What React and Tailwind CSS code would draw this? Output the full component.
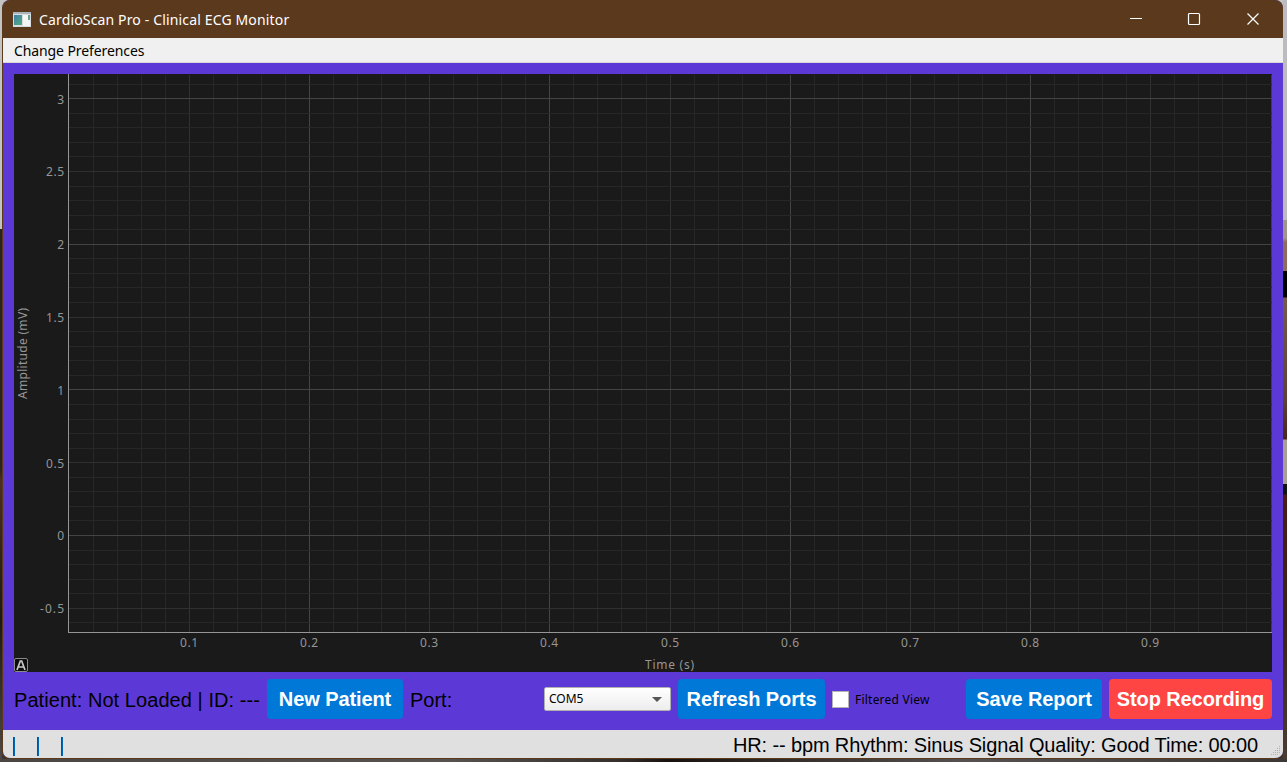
import React from "react";

const range = (a, b) => Array.from({ length: b - a + 1 }, (_, i) => a + i);

const PX = (t) => Math.round(54.9 + t * 1201.3);
const yOf = (v) => 461 - v * 145.6;
const PY = (v) => Math.round(yOf(v));

const UI = "font-['Noto_Sans',sans-serif]";
const ARIAL = "font-['Liberation_Sans',Arial,sans-serif]";

function Chart() {
  return (
    <svg width="1258" height="598" viewBox="0 0 1258 598" className="block shrink-0 bg-[#1a1a1a]">
      <g shapeRendering="crispEdges">
        {range(1, 49).map((k) => (
          <rect key={k} x={PX(k / 50)} y="1" width="1" height="557" fill={k % 10 === 0 ? "#444444" : k % 5 === 0 ? "#323232" : "#272727"} />
        ))}
        <rect x="1257" y="1" width="1" height="557" fill="#3e3e3e" />
        {range(-6, 31).map((k) => (
          <rect key={k} x="55" y={PY(k / 10)} width="1203" height="1" fill={k % 10 === 0 ? "#444444" : k % 5 === 0 ? "#303030" : "#272727"} />
        ))}
        <rect x="54" y="0" width="1" height="559" fill="#969696" />
        <rect x="54" y="558" width="1204" height="1" fill="#969696" />
      </g>
      <g fill="#969696" fontSize="12" fontFamily="'Noto Sans', sans-serif">
        {range(1, 9).map((k) => (
          <text key={k} x={PX(k / 10)} y="573" textAnchor="middle" textLength="18">{"0." + k}</text>
        ))}
        {["3", "2.5", "2", "1.5", "1", "0.5", "0"].map((s) => (
          <text key={s} x="50" y={Math.ceil(yOf(Number(s))) + 5} textAnchor="end" textLength={s.length > 1 ? 18 : 7}>{s}</text>
        ))}
        <text x="50" y="539" textAnchor="end" textLength="24">-0.5</text>
        <text x="655.500" y="595" textAnchor="middle" textLength="49">Time (s)</text>
        <text transform="translate(12.5 279.500) rotate(-90)" textAnchor="middle" textLength="91">Amplitude (mV)</text>
      </g>
      <rect x="0.5" y="584.5" width="13" height="13" rx="1.5" fill="#0c0c0c" stroke="#8a8a8a" />
      <path d="M3 596 6.300 587h1.400L11 596M4.500 593h5" fill="none" stroke="#c8c8c8" strokeWidth="1.700" />
    </svg>
  );
}

function Button({ className, children }) {
  return (
    <button className={`h-10 shrink-0 rounded-[4px] whitespace-nowrap text-[20px] font-bold leading-10 tracking-[-0.1px] text-white ${ARIAL} ${className}`}>
      {children}
    </button>
  );
}

function StatusBar() {
  return (
    <span className="flex h-[19px] w-0.5">
      <span className="w-px bg-[#6b3a10]" />
      <span className="w-px bg-[#0066b4]" />
    </span>
  );
}

function AppIcon() {
  return (
    <svg width="18" height="15" viewBox="0 0 18 15" shapeRendering="crispEdges">
      <defs>
        <linearGradient id="scr" x1="0" y1="0" x2="1" y2="1">
          <stop offset="0" stopColor="#3f7fae" />
          <stop offset="1" stopColor="#54ad7c" />
        </linearGradient>
      </defs>
      <rect width="18" height="15" fill="#d8dde0" />
      <rect width="18" height="2" fill="#aab4bc" />
      <rect x="1" y="3" width="8" height="10" fill="url(#scr)" />
      <rect x="10" y="3" width="7" height="11" fill="#f4f5f5" />
      <rect x="15" y="3" width="2" height="5" fill="#6aa093" />
    </svg>
  );
}

export default function App() {
  return (
    <div className="flex h-[762px] w-[1287px] flex-col overflow-hidden bg-[linear-gradient(to_right,#4a4643,#555250_35%,#35302c_48%,#171210_52%,#2b2521_58%,#555150_75%,#3c3835)]">
      <div className="flex h-[759px]">
        <div className="w-0.5 shrink-0 bg-[linear-gradient(#c4c4c4_0_229px,#2c241c_229px_470px,#4a3020_480px,#1d1814_620px,#4b4845)]" />
        <div className="w-[1281px] shrink-0 bg-[linear-gradient(#c4c4c4_0_50%,#3b3531_50%)]">
          <div className="flex h-[759px] w-full flex-col overflow-hidden rounded-[8px] border-b border-l border-[#5b391c] bg-[#5c39d6]">
            <div className={`flex h-[38px] shrink-0 items-center bg-[#5b391c] pl-[10px] pr-[23px] text-white ${UI}`}>
              <AppIcon />
              <span className="ml-2 whitespace-nowrap text-[14px] tracking-[0.15px]">CardioScan Pro - Clinical ECG Monitor</span>
              <svg className="ml-auto" width="130" height="14" viewBox="0 0 130 14" fill="none" stroke="#fff">
                <path d="M0 6.500h12" />
                <rect x="58.500" y="1.500" width="11" height="11" rx="1" strokeWidth="1.200" />
                <path d="m117.500 1.500 11 11m0-11-11 11" strokeWidth="1.200" />
              </svg>
            </div>
            <div className={`flex h-[25px] shrink-0 items-center border-b border-[#d8d8d8] bg-[#f0f0f0] pl-[11px] text-[14px] text-black ${UI}`}>
              <span className="whitespace-nowrap tracking-[-0.1px]">Change Preferences</span>
            </div>
            <div className="flex h-[667px] shrink-0 flex-col px-[11px] pt-[11px]">
              <Chart />
              <div className="flex items-center pt-[7px] text-black">
                <span className={`h-10 w-[253px] shrink-0 whitespace-nowrap pt-px text-[20px] leading-10 tracking-[0.06px] ${ARIAL}`}>Patient: Not Loaded | ID: ---</span>
                <Button className="w-[136px] bg-[#0078d7]">New Patient</Button>
                <span className={`ml-[7px] h-10 w-[134px] shrink-0 pt-px text-[20px] leading-10 ${ARIAL}`}>Port:</span>
                <div className={`flex h-6 w-[127px] shrink-0 items-center justify-between rounded-[2px] border border-[#b0b0b0] bg-linear-to-b from-white to-[#ededed] pl-1 pr-[8px] text-[12px] ${UI}`}>
                  <span>COM5</span>
                  <svg width="10" height="5" viewBox="0 0 10 5"><path d="M0 0h10L5 5z" fill="#555" /></svg>
                </div>
                <Button className="ml-[7px] w-[147px] bg-[#0078d7]">Refresh Ports</Button>
                <span className="ml-[7px] size-[17px] shrink-0 border border-[#b4b4b4] bg-white" />
                <span className={`ml-[6px] whitespace-nowrap pt-px text-[12px] tracking-[0.22px] ${UI}`}>Filtered View</span>
                <Button className="ml-auto w-[136px] bg-[#0078d7]">Save Report</Button>
                <Button className="ml-[7px] w-[163px] bg-[#ff4444]">Stop Recording</Button>
              </div>
            </div>
            <div className="flex h-[28px] shrink-0 items-center bg-[#e0e0e0] pl-[10px] text-black">
              <div className="flex gap-[22px] pt-1">
                <StatusBar />
                <StatusBar />
                <StatusBar />
              </div>
              <span className={`ml-auto whitespace-nowrap pt-0.5 text-[20px] tracking-[-0.13px] ${ARIAL}`}>HR: -- bpm Rhythm: Sinus Signal Quality: Good Time: 00:00</span>
              <svg className="ml-[13px] self-end" width="12" height="14" viewBox="0 0 12 14" shapeRendering="crispEdges" fill="#b0b0b0">
                {[[8, 2], [6, 4], [8, 4], [4, 6], [6, 6], [8, 6], [2, 8], [4, 8], [6, 8], [8, 8], [0, 10], [2, 10], [4, 10], [6, 10]].map(([x, y]) => (
                  <rect key={x + "-" + y} x={x} y={y} width="1" height="1" />
                ))}
              </svg>
            </div>
          </div>
        </div>
        <div className="w-1 shrink-0 bg-[linear-gradient(#bcbcc0_0_220px,#a0958a_220px_238px,#8f6b5c_242px_271px,#000_271px_297px,#75594a_298px,#5f4135_400px,#4a251c_439px,#a89e92_440px_484px,#101514_484px_494px,#4a1c14_495px,#3a2218_620px,#4b3c32)]" />
      </div>
    </div>
  );
}
